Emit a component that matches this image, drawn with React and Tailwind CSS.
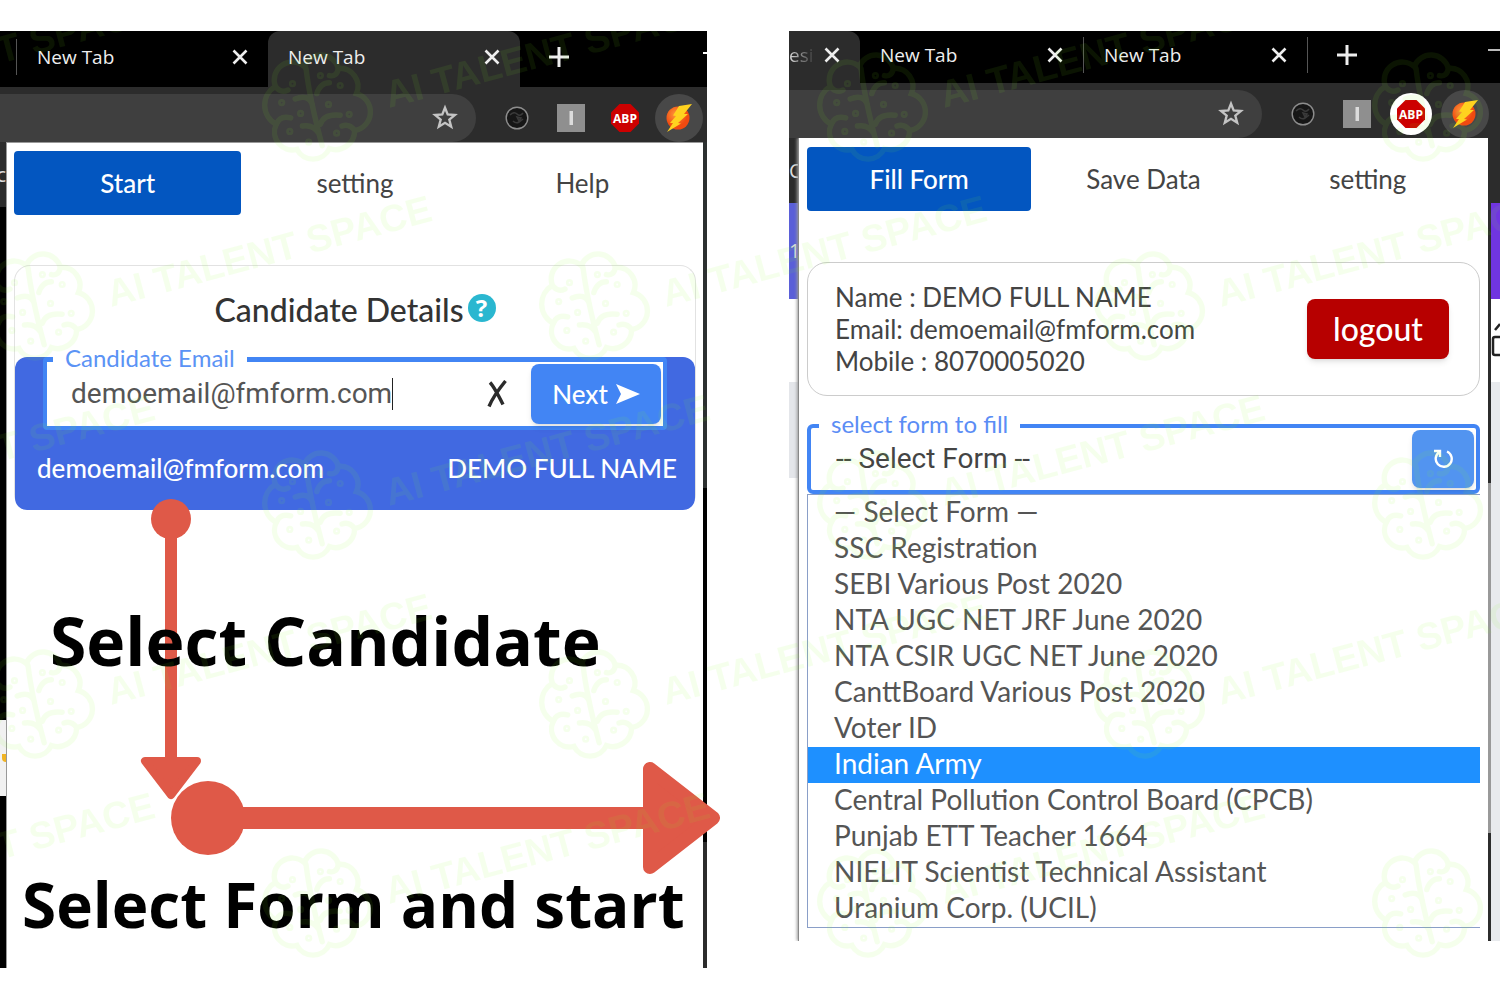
import { useState } from "react";

const FORMS = [
    "— Select Form —",
    "SSC Registration",
    "SEBI Various Post 2020",
    "NTA UGC NET JRF June 2020",
    "NTA CSIR UGC NET June 2020",
    "CanttBoard Various Post 2020",
    "Voter ID",
    "Indian Army",
    "Central Pollution Control Board (CPCB)",
    "Punjab ETT Teacher 1664",
    "NIELIT Scientist Technical Assistant",
    "Uranium Corp. (UCIL)",
];

const DOTS = [[-25, -27], [6, -36], [28, -25], [-37, -6], [-16, 6], [15, -4], [38, 7], [-28, 26], [24, 28], [-7, 38]];

function CloseIcon() {
    return (
        <svg viewBox="0 0 16 16" className="size-4 shrink-0" fill="none" stroke="currentColor" strokeWidth="2.6">
            <path d="M1.500 1.500 14.500 14.500M14.500 1.500 1.500 14.500" />
        </svg>
    );
}

function StarIcon() {
    return (
        <svg viewBox="0 0 24 24" className="size-7" fill="none" stroke="#c4c4c4" strokeWidth="2">
            <path d="M12 3.2 14.300 9l6.200.4-4.800 4 1.600 6.100L12 16.100l-5.300 3.400 1.600-6.100-4.800-4L9.700 9z" />
        </svg>
    );
}

function DarkDiscIcon() {
    return (
        <svg viewBox="0 0 24 24" className="size-6">
            <circle cx="12" cy="12" r="10.800" fill="#161616" stroke="#8d8d8d" strokeWidth="1.4" />
            <path d="M5 9q4-4 7-1t6-1M8 15q3 3 6 1t4-3M12 11l4 1-2 3z" fill="none" stroke="#3a3a3a" strokeWidth="1.6" />
        </svg>
    );
}

function SquareIcon() {
    return (
        <svg viewBox="0 0 28 28" className="size-7">
            <rect width="28" height="28" fill="#8f8f8f" />
            <rect x="12.500" y="7" width="3.500" height="14" fill="#dcdcdc" />
        </svg>
    );
}

function AbpIcon() {
    return (
        <svg viewBox="0 0 28 28" className="size-7">
            <path d="M8.500 0h11L28 8.500v11L19.500 28h-11L0 19.500v-11z" fill="#cc0000" />
            <text x="14" y="18.500" textAnchor="middle" fill="#fff" className="font-['Open_Sans'] text-[12px] font-bold">ABP</text>
        </svg>
    );
}

function BoltIcon() {
    return (
        <svg viewBox="0 0 28 28" className="size-7">
            <defs>
                <radialGradient id="ball" cx="40%" cy="35%">
                    <stop offset="0" stopColor="#ff9a3c" />
                    <stop offset="1" stopColor="#f04a10" />
                </radialGradient>
            </defs>
            <circle cx="13" cy="14" r="11.500" fill="url(#ball)" />
            <path d="M14 2 27 0l-8 10 4 0L13 19l3 .5L2 28l6-9-3 0 6-7-3-.5z" fill="#ffd21f" />
        </svg>
    );
}

function Tab({ label, size, active, divider }) {
    return (
        <div className={`flex h-full items-center pb-1 ${size} ${active ? "rounded-t-xl bg-[#2c2c2c]" : ""}`}>
            {divider === "left" && <span className="h-9 w-px bg-[#555]" />}
            <button className="flex flex-1 items-center justify-between px-5 text-left">
                {label}
                <CloseIcon />
            </button>
            {divider === "right" && <span className="h-9 w-px bg-[#555]" />}
        </div>
    );
}

function NewTabButton() {
    return (
        <button aria-label="New tab" className="mb-1 ml-7">
            <svg viewBox="0 0 22 22" className="size-[22px]" stroke="currentColor" strokeWidth="3">
                <path d="M11 1v20M1 11h20" />
            </svg>
        </button>
    );
}

function Toolbar({ haloAbp, end }) {
    return (
        <div className={`flex h-[55px] items-center bg-[#2c2c2c] pt-1.5 ${end}`}>
            <div className="mr-3.5 flex h-12 flex-1 items-center justify-end rounded-r-full bg-[#3f3f3f] pr-[17px]">
                <button aria-label="Bookmark"><StarIcon /></button>
            </div>
            <button aria-label="Disc" className="flex w-[54px] justify-center"><DarkDiscIcon /></button>
            <button aria-label="Square" className="flex w-[54px] justify-center"><SquareIcon /></button>
            <button aria-label="Adblock" className="flex w-[54px] justify-center">
                <span className={`flex size-[42px] items-center justify-center rounded-full ${haloAbp ? "bg-white" : ""}`}><AbpIcon /></span>
            </button>
            <button aria-label="Form filler" className="flex w-[54px] justify-center">
                <span className="flex size-12 items-center justify-center rounded-full bg-[#484848]"><BoltIcon /></span>
            </button>
        </div>
    );
}

function Nav({ items }) {
    const [current, setCurrent] = useState(items[0]);
    return (
        <nav className="grid grid-cols-3">
            {items.map(item => (
                <button key={item} onClick={() => setCurrent(item)} className={`h-16 rounded-sm ${item === current ? "bg-[#0356c0] font-medium text-white" : "text-[#444]"}`}>
                    {item}
                </button>
            ))}
        </nav>
    );
}

// red pointers that join the two steps
function Arrows() {
    return (
        <svg width="720" height="400" viewBox="0 0 720 400" className="pointer-events-none absolute top-[468px] left-0 z-10 max-w-none" fill="#df5948" stroke="#df5948" strokeLinejoin="round">
            <g strokeWidth="0">
                <circle cx="171" cy="20" r="20" />
                <rect x="165" y="20" width="12" height="240" />
                <circle cx="208" cy="319" r="37" />
                <rect x="208" y="308" width="440" height="22" />
            </g>
            <path strokeWidth="8" d="M145 262h52l-26 34z" />
            <path strokeWidth="14" d="M650 270v98l63-49z" />
        </svg>
    );
}

function Brain({ x, y }) {
    return (
        <g transform={`translate(${x} ${y}) scale(0.9)`}>
            <path d="M-44-24A20 20 0 0 1-12-46A20 20 0 0 1 26-44A20 20 0 0 1 46-16A21 21 0 0 1 44 25A21 21 0 0 1 16 45A20 20 0 0 1-20 46A20 20 0 0 1-43 18A24 24 0 0 1-44-24z" />
            <path d="M-10-44Q-6-10 8 42M-22-10q14-6 19 6M2-16q4-12 14-12M-14 20q12-2 18 8M6 18q4-12 22-10M-43 18q4-10 16-7M44 25q-6-8-14-5M26-44q-2 10-10 8M-44-24q6 8 14 4" />
            {DOTS.map(([cx, cy]) => (
                <circle key={`${cx},${cy}`} cx={cx} cy={cy} r="2.500" strokeWidth="3" />
            ))}
        </g>
    );
}

function Stamp({ x, y }) {
    return (
        <g>
            <Brain x={x} y={y} />
            <text transform={`translate(${x + 74} ${y}) rotate(-15)`} fill="#87ff22" stroke="none" className="font-['Liberation_Sans_Narrow','Liberation_Sans'] text-[38px] font-bold">AI TALENT SPACE</text>
        </g>
    );
}

function Watermark() {
    const rows = [0, 1, 2, 3, 4];
    return (
        <svg aria-hidden="true" className="pointer-events-none absolute inset-x-0 top-[31px] bottom-0 z-30 size-full opacity-8" fill="none" stroke="#87ff22" strokeWidth="6" strokeLinecap="round">
            {rows.map(row => [-1, 0, 1, 2].map(col => (
                <Stamp key={`${row}-${col}`} x={(row % 2 ? 37 : 315) + col * 555} y={77 + row * 199} />
            )))}
        </svg>
    );
}

function CandidateStep() {
    const [email, setEmail] = useState("demoemail@fmform.com");
    return (
        <section className="relative min-w-0 self-start">
            <div className="flex h-14 items-center overflow-hidden bg-black pl-4 font-['Open_Sans'] text-[19px] text-[#eee]">
                <Tab label="New Tab" size="w-63" divider="left" />
                <Tab label="New Tab" size="w-63" active />
                <NewTabButton />
                <span className="mb-3 ml-auto h-0.5 w-1 bg-white" />
            </div>
            <Toolbar end="pr-px" />

            <div className="flex">
                <div className="flex w-1.5 shrink-0 flex-col overflow-hidden bg-black">
                    <div className="flex h-[65px] items-center justify-end bg-[#2c2c2c] font-['Open_Sans'] text-xl text-[#ddd]">Cc</div>
                    <div className="mt-[513px] flex h-[76px] items-center justify-end bg-[#f1f1f1]">
                        <span className="h-2 w-1 rounded-bl bg-[#f0b323]" />
                    </div>
                </div>
                <div className="min-h-[826px] min-w-0 flex-1 border-t border-l border-[#999] bg-white px-[7px] pt-2">
                    <Nav items={["Start", "setting", "Help"]} />

                    <div className="mt-[50px] rounded-2xl border border-b-0 border-[#e2e2e2] pt-6">
                        <h2 className="flex justify-center gap-1 text-[32px] leading-10 font-medium text-[#333]">
                            Candidate Details
                            <button aria-label="Help" className="mt-1 flex size-7 items-center justify-center rounded-full bg-[#2ab7d0] font-['Open_Sans'] text-2xl leading-7 font-bold text-white">?</button>
                        </h2>
                        <div className="mt-[27px] h-[153px] rounded-xl bg-[#4169e1] text-white">
                            <div className="relative mx-7 flex h-[73px] items-center rounded border-4 border-t-[5px] border-[#4285f4] bg-white pr-0.5 pl-6">
                                <label htmlFor="email" className="absolute -top-[18px] left-1.5 bg-white px-3 text-[24px] leading-7 text-[#5b93f5]">Candidate Email</label>
                                <input id="email" value={email} onChange={e => setEmail(e.target.value)} className="field-sizing-content font-[Roboto] text-[28px] text-[#555] outline-none" />
                                <span className="h-8 w-px bg-[#222]" />
                                <button aria-label="Clear" onClick={() => setEmail("")} className="mr-6 ml-auto">
                                    <svg viewBox="0 0 20 28" className="h-7 w-5" fill="none" stroke="#2b2b2b" strokeWidth="3.400">
                                        <path d="M3 2.500c3 3 9 14 13 22M18.500 1C12 9 6 17 2 26.500" />
                                    </svg>
                                </button>
                                <button className="flex h-[60px] w-[130px] items-center justify-center gap-2 rounded-lg bg-[#4285f4] font-medium shadow-md">
                                    Next
                                    <svg viewBox="0 0 24 20" className="h-5 w-6" fill="#fff"><path d="M0 0 24 10 0 20 5 10z" /></svg>
                                </button>
                            </div>
                            <div className="flex justify-between pt-5 pr-[18px] pl-[22px] leading-9 font-medium">
                                <span>demoemail@fmform.com</span>
                                <span>DEMO FULL NAME</span>
                            </div>
                        </div>
                    </div>

                    <p className="relative z-20 mt-[85px] pl-9 font-['Open_Sans'] text-[66px] leading-[90px] font-bold whitespace-nowrap text-black">Select Candidate</p>
                    <p className="relative z-20 mt-[174px] pl-2 font-['Open_Sans'] text-[62px] leading-[90px] font-bold whitespace-nowrap text-black">Select Form and start</p>
                </div>
                <div className="flex w-1 shrink-0 flex-col bg-black">
                    <div className="h-[346px] bg-[#2c3030]" />
                    <div className="mt-[354px] flex-1 bg-[#2c2c2c]" />
                </div>
            </div>
            <Arrows />
        </section>
    );
}

function FormStep() {
    const [form, setForm] = useState("Indian Army");
    return (
        <section className="min-w-0 self-start">
            <div className="flex h-[52px] items-center overflow-hidden bg-black font-['Open_Sans'] text-[19px] text-[#eee]">
                <div className="flex h-full w-[71px] items-center justify-between rounded-tr-xl bg-[#2c2c2c] pr-5 pb-1">
                    <span className="bg-linear-to-r from-[#ddd] to-[#3a3a3a] bg-clip-text text-transparent">esi</span>
                    <CloseIcon />
                </div>
                <Tab label="New Tab" size="w-56" divider="right" />
                <Tab label="New Tab" size="w-56" divider="right" />
                <NewTabButton />
                <span className="mb-3.5 ml-auto h-0.5 w-3 bg-[#bbb]" />
            </div>
            <Toolbar haloAbp end="pr-2" />

            <div className="flex overflow-hidden">
                <div className="flex w-[9px] shrink-0 flex-col overflow-hidden text-[#ddd]">
                    <div className="flex h-[65px] items-center bg-[#2c2c2c] font-['Open_Sans'] text-xl">Cc</div>
                    <div className="flex h-24 items-center bg-[#5a5fd8] font-['Open_Sans'] text-xl">12</div>
                    <div className="mt-[83px] h-24 bg-[#e4e6ea]" />
                </div>
                <div className="min-w-0 flex-1 border-l border-[#888] bg-white px-2 pt-[9px] pb-[13px] shadow-[-1px_0_3px_#999]">
                    <Nav items={["Fill Form", "Save Data", "setting"]} />

                    <div className="mt-[51px] flex items-center justify-between rounded-[20px] border border-[#ccc] py-[18px] pr-[30px] pl-[27px]">
                        <div className="leading-8 text-[#444]">
                            <p>Name : DEMO FULL NAME</p>
                            <p>Email: demoemail@fmform.com</p>
                            <p>Mobile : 8070005020</p>
                        </div>
                        <button className="h-[60px] w-[142px] rounded-lg bg-[#b70000] text-[32px] font-medium text-white shadow-md">logout</button>
                    </div>

                    <div className="relative mt-7 flex h-[70px] items-center rounded-md border-4 border-[#4285f4] pr-0.5 pl-[25px]">
                        <label htmlFor="form" className="absolute -top-[18px] left-2 bg-white px-3 text-[24px] leading-7 text-[#5b8df5]">select form to fill</label>
                        <select id="form" defaultValue="none" className="flex-1 appearance-none font-[Roboto] text-[28px] text-[#444] outline-none">
                            <option value="none">-- Select Form --</option>
                        </select>
                        <button aria-label="Reload forms" className="flex h-[58px] w-[62px] items-center justify-center rounded-lg bg-[#5294f0] shadow-md">
                            <svg viewBox="0 0 20 20" className="size-5" fill="none" stroke="#fff" strokeWidth="2.400">
                                <path d="M1 2h6v6M6.500 3A8 8 0 1 0 14 2.500" />
                            </svg>
                        </button>
                    </div>
                    <ul role="listbox" aria-label="Forms" className="border border-r-0 border-[#8a9fc8] text-[28px] text-[#555]">
                        {FORMS.map(name => (
                            <li key={name} role="option" aria-selected={name === form} onClick={() => setForm(name)} className={`h-9 cursor-pointer pl-[26px] leading-8 ${name === form ? "bg-[#1e90ff] text-white" : ""}`}>
                                {name}
                            </li>
                        ))}
                    </ul>
                </div>
                <div className="flex w-[3px] shrink-0 flex-col bg-[#999]">
                    <div className="h-[345px] bg-[#2c2c2c]" />
                    <div className="mt-[350px] flex-1 bg-[#2c2c2c]" />
                </div>
                <div className="flex w-[9px] shrink-0 flex-col overflow-hidden bg-[#e8eaed]">
                    <div className="h-[65px] bg-[#2c2c2c]" />
                    <div className="h-24 bg-[#7035e0]" />
                    <div className="flex h-[83px] items-center bg-white">
                        <svg viewBox="0 0 9 36" className="h-9 w-[9px]" fill="none" stroke="#222" strokeWidth="2.500">
                            <path d="M4 7 9 1M12 14H4q-2 0-2 2v14q0 2 2 2h8" />
                        </svg>
                    </div>
                </div>
            </div>
        </section>
    );
}

export default function App() {
    return (
        <main className="relative grid min-h-screen grid-cols-[707fr_711fr] gap-[82px] overflow-hidden bg-white pt-[31px] font-[Lato,sans-serif] text-[26px]">
            <CandidateStep />
            <FormStep />
            <Watermark />
        </main>
    );
}
